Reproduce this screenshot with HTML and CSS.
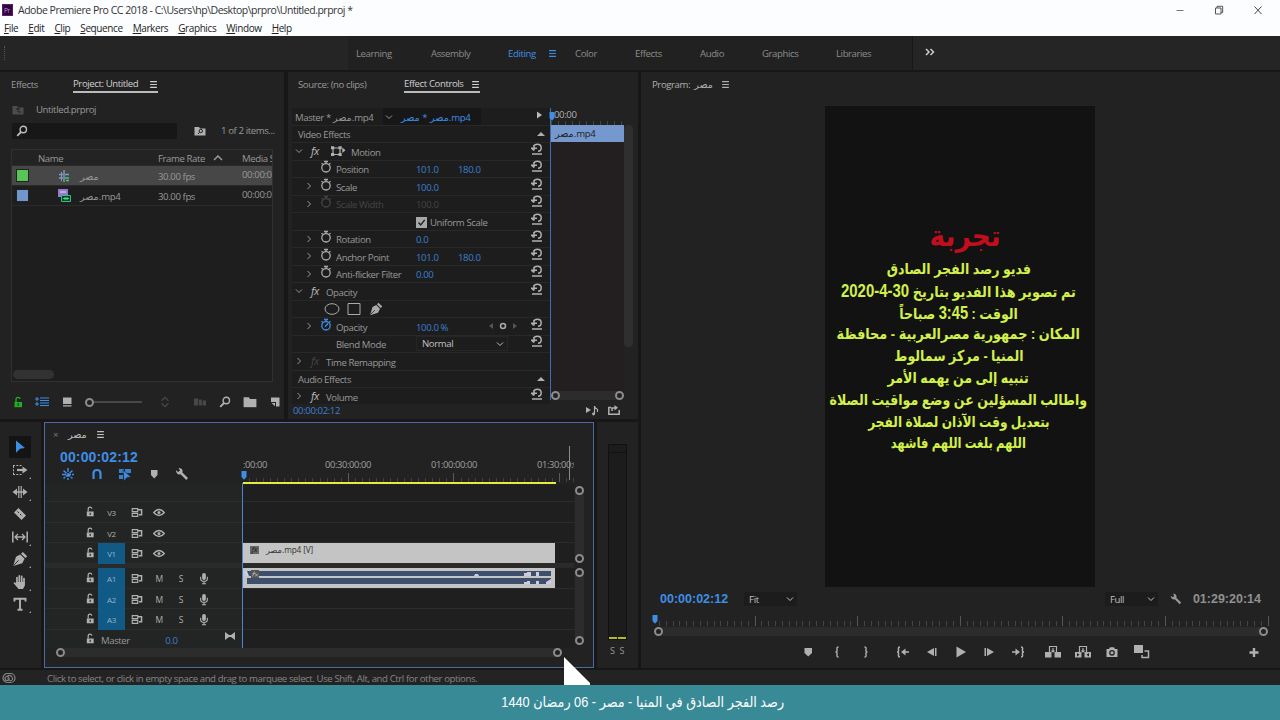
FILE: index.html
```html
<!DOCTYPE html>
<html lang="en">
<head>
  <meta charset="UTF-8" />
  <meta name="viewport" content="width=device-width, initial-scale=1.0"/>
  <title>Adobe Premiere Pro CC 2018</title>
  <link rel="stylesheet" href="styles.css">
</head>
<body>

  <svg class="sprite" width="0" height="0">
    <symbol id="reset" viewBox="0 0 12 12"><path d="M2.5 3.500Q3.500 1.200 6.200 1.200Q10.200 1.200 10.200 4.800Q10.200 8.300 7 8.300M0 5.200h6M3 7.500L.5 5.200M3 7.500V3M1 11h10" fill="none" stroke="currentColor" stroke-width="1.5"/></symbol>
    <symbol id="watch" viewBox="0 0 12 14"><circle cx="6" cy="7.8" r="4.2" fill="none" stroke="currentColor" stroke-width="1.3"/><path d="M4 1.5h4M6 1.5v2M1.5 3.2l1.2 1M10.5 3.2l-1.2 1" stroke="currentColor" stroke-width="1.3"/></symbol>
    <symbol id="watch-on" viewBox="0 0 12 14"><circle cx="6" cy="7.8" r="4.2" fill="none" stroke="currentColor" stroke-width="1.3"/><path d="M4 1.5h4M6 1.5v2M1.5 3.2l1.2 1M10.5 3.2l-1.2 1M5 8.8L8 5.5" stroke="currentColor" stroke-width="1.3"/></symbol>
    <symbol id="right" viewBox="0 0 8 8"><path d="M2.5 1l3 3-3 3" fill="none" stroke="currentColor"/></symbol>
    <symbol id="down" viewBox="0 0 8 8"><path d="M1 2.5l3 3 3-3" fill="none" stroke="currentColor"/></symbol>
    <symbol id="menu" viewBox="0 0 8 8"><path d="M1 1.5h6M1 4h6M1 6.5h6" stroke="currentColor" stroke-width="1.1"/></symbol>
    <symbol id="search" viewBox="0 0 12 12"><circle cx="7.3" cy="4.5" r="3.2" fill="none" stroke="currentColor" stroke-width="1.4"/><path d="M5 7L1.2 10.8" stroke="currentColor" stroke-width="1.8"/></symbol>
    <symbol id="lock" viewBox="0 0 10 12"><path d="M1.5 6h7.5v5.2H1.5z" fill="currentColor"/><path d="M3 6V3.5Q3 1.3 5 1.3T6.8 3" fill="none" stroke="currentColor" stroke-width="1.3"/><path d="M5.2 7.3v2.4" stroke="#222" stroke-width="1.2"/></symbol>
    <symbol id="sync" viewBox="0 0 12 12"><path d="M.8 1.800h6v3.200h-6zM.8 7h6v3.200h-6z" fill="none" stroke="currentColor" stroke-width="1.2"/><path d="M7 3h4v5.500H8" fill="none" stroke="currentColor" stroke-width="1.6"/></symbol>
    <symbol id="eye" viewBox="0 0 12 10"><path d="M.7 5Q6-1 11.300 5Q6 11 .7 5z" fill="none" stroke="currentColor" stroke-width="1.4"/><circle cx="6" cy="5" r="1.500" fill="currentColor"/></symbol>
    <symbol id="mic" viewBox="0 0 10 14"><rect x="3" y="1" width="4" height="7.5" rx="2" fill="currentColor"/><path d="M1.4 5v2.2Q1.4 10 5 10T8.6 7.2V5M5 10v3M2.8 12.6h4.4" fill="none" stroke="currentColor" stroke-width="1.2"/></symbol>
    <symbol id="wrench" viewBox="0 0 14 14"><path d="M1 3.2L3.2 5 5 3.6 3.6 1Q6 .6 7.2 2.6 8 4 7.4 5.4L13 11l-1.7 2L5.6 7.2Q3.6 8 2.2 6.6 .8 5.2 1 3.2z" fill="currentColor"/></symbol>
    <symbol id="pen" viewBox="0 0 14 14"><path d="M9.5.8l3.8 3.8-1.6 1.5L7.9 2.3zM7.2 3l3.8 3.8-2 4L1 13.2 3.5 5z" fill="currentColor"/><path d="M1.2 12.8l4.5-4.6" stroke="#222" stroke-width=".8"/></symbol>
    <symbol id="folder" viewBox="0 0 12 10"><path d="M.5 1H5l1 1.4h5.5V9.5H.5z" fill="currentColor"/></symbol>
    <symbol id="playhead" viewBox="0 0 6 9"><path d="M.5 0h5v6L3 8.8.5 6z" fill="currentColor"/></symbol>
  </svg>

  <div class="app">
    <header class="titlebar">
      <svg class="logo" viewBox="0 0 10 11"><rect width="10" height="11" fill="#2a0634"/><rect x=".5" y=".5" width="9" height="10" fill="none" stroke="#5b1c72"/><text x="1.8" y="7.8" font-size="6" font-family="Open Sans" fill="#d080f0">Pr</text></svg>
      <span class="title">Adobe Premiere Pro CC 2018 - C:\Users\hp\Desktop\prpro\Untitled.prproj *</span>
      <svg class="wbtn" viewBox="0 0 10 10"><path d="M1.5 5.5h7" stroke="#777"/></svg>
      <svg class="wbtn" viewBox="0 0 10 10"><path d="M1.5 3h5.5v6H1.5zM3 3V1.3h5.7v6.2H7" fill="none" stroke="#555"/></svg>
      <svg class="wbtn" viewBox="0 0 10 10"><path d="M1.5 1.5l7 7.5M8.5 1.5l-7 7.5" stroke="#444"/></svg>
    </header>
    <nav class="menubar">
      <span><u>F</u>ile</span><span><u>E</u>dit</span><span><u>C</u>lip</span><span><u>S</u>equence</span><span><u>M</u>arkers</span><span><u>G</u>raphics</span><span><u>W</u>indow</span><span><u>H</u>elp</span>
    </nav>
    <nav class="workspaces">
      <div class="grip"></div>
      <div class="ws-list">
        <span class="ws learning">Learning</span><span class="ws assembly">Assembly</span><span class="ws editing">Editing</span><svg class="ws-menu" viewBox="0 0 8 8"><use href="#menu"/></svg><span class="ws color">Color</span><span class="ws effects">Effects</span><span class="ws audio-ws">Audio</span><span class="ws graphics">Graphics</span><span class="ws">Libraries</span>
      </div>
      <svg class="more" viewBox="0 0 10 8"><path d="M1 1l3 3-3 3M5.5 1l3 3-3 3" fill="none" stroke="currentColor" stroke-width="1.5"/></svg>
    </nav>

    <main class="main">
      <div class="left">
        <div class="upper">
          <section class="panel project">
            <div class="tabs">
              <span class="tab tab-effects">Effects</span>
              <span class="tab on">Project: Untitled<svg class="burger" viewBox="0 0 8 8"><use href="#menu"/></svg></span>
            </div>
            <div class="crumb">
              <svg class="i12 dim" viewBox="0 0 12 10"><use href="#folder"/><path d="M4 4.5L6 3l2 1.5M6 3v4h3" fill="none" stroke="#222"/></svg>
              <span>Untitled.prproj</span>
            </div>
            <div class="search-row">
              <div class="search"><svg class="i12"><use href="#search"/></svg></div>
              <svg class="i12" viewBox="0 0 12 10"><use href="#folder"/><circle cx="6.8" cy="5" r="1.7" fill="none" stroke="#222"/><path d="M5.5 6.3L4 8" stroke="#222"/></svg>
              <span>1 of 2 items...</span>
            </div>
            <div class="table">
              <div class="tr th"><span></span><span class="name-head">Name</span><span class="rate">Frame Rate<svg class="sort" viewBox="0 0 10 6"><path d="M1 5l4-4 4 4" fill="none" stroke="currentColor" stroke-width="1.5"/></svg></span><span>Media S</span></div>
              <div class="tr selected"><i class="swatch green"></i>
                <svg class="i12 kind" viewBox="0 0 12 12"><path d="M1 4.5h4M1 8h4M7 4.5h4" stroke="#7a9cc8" stroke-width="1.5"/><path d="M6 0v12" stroke="#a8b8d8"/><path d="M3.5 2v9" stroke="#7a9cc8"/><path d="M7 8h4M8 10.5h3" stroke="#3ec98a" stroke-width="1.5"/></svg>
                <span class="fname">مصر</span><span class="rate">30.00 fps</span><span class="start">00:00:0</span></div>
              <div class="tr"><i class="swatch blue"></i>
                <svg class="i13 kind" viewBox="0 0 13 13"><path d="M0 0h10v8H0z" fill="#9678cc"/><path d="M2 2h6v2H2z" fill="#c0a8e8"/><path d="M3.5 6.5h9v6h-9z" fill="#10402a" stroke="#2fc47a"/><path d="M5 9.5h6M7 8v3M9 8v3" stroke="#48d894"/></svg>
                <span class="fname">مصر.mp4</span><span class="rate">30.00 fps</span><span class="start">00:00:0</span></div>
              <div class="thumb"></div>
            </div>
            <div class="project-tools">
              <svg class="i12 lime"><use href="#lock"/></svg>
              <svg class="i14 blue-ink" viewBox="0 0 14 10"><path d="M1 1h2v2H1zM1 6h2v2H1z" fill="none" stroke="currentColor"/><path d="M5 1h9M5 3.5h9M5 6h9M5 8.5h9" stroke="currentColor" stroke-width="1.2"/></svg>
              <svg class="i14" viewBox="0 0 14 12"><path d="M3 1.5h8.5v6.5H3zM3 9.3h8.5v1.3H3z" fill="currentColor"/></svg>
              <div class="slider"><i></i></div>
              <svg class="i14 dim sorticon" viewBox="0 0 14 14"><path d="M3 5.5l4-4 4 4M3 8.5l4 4 4-4" fill="none" stroke="currentColor" stroke-width="1.5"/></svg>
              <svg class="i14 dim automate" viewBox="0 0 14 12"><path d="M1 2.5h4v7H1zM5.8 3.5h3v6h-3zM9.6 4.5h3.4v5H9.6z" fill="currentColor"/></svg>
              <svg class="i14"><use href="#search"/></svg>
              <svg class="i14" viewBox="0 0 12 10"><use href="#folder"/></svg>
              <svg class="i14 newitem" viewBox="0 0 14 12"><path d="M3 1.5h8.5v9H8V6H3z" fill="currentColor"/><path d="M3.5 7h3.5v3.2z" fill="currentColor"/></svg>
            </div>
          </section>

          <section class="panel controls">
            <div class="tabs">
              <span class="tab tab-source">Source: (no clips)</span>
              <span class="tab on">Effect Controls<svg class="burger" viewBox="0 0 8 8"><use href="#menu"/></svg></span>
            </div>
            <div class="fx-body">
              <div class="fx-list">
                <div class="fx-row fx-head"><span class="master">Master * مصر.mp4</span><span class="clipname"><svg class="i8"><use href="#down"/></svg>مصر * مصر.mp4</span><svg class="i8 play" viewBox="0 0 8 8"><path d="M2 .5L7 4 2 7.5z" fill="currentColor"/></svg></div>
                <div class="fx-row cat"><span>Video Effects</span><i class="tri"></i></div>
                <div class="fx-row group"><svg class="i8"><use href="#down"/></svg><em>fx</em><svg class="box" viewBox="0 0 16 12"><path d="M3 3h7v6.5H3z" fill="none" stroke="currentColor" stroke-width="1.2"/><path d="M1 1.3h3.2v3H1zM8.5 1.3h3.2v3H8.5zM1 8h3.2v3H1zM8.5 8h3.2v3H8.5zM12.3 2.5l3.2 2.7-3.2 2.7z" fill="currentColor"/></svg><span>Motion</span><svg class="reset"><use href="#reset"/></svg></div>
                <div class="fx-row prop"><i></i><svg class="watch"><use href="#watch"/></svg><span>Position</span><b>101.0</b><b>180.0</b><svg class="reset"><use href="#reset"/></svg></div>
                <div class="fx-row prop"><svg class="i8"><use href="#right"/></svg><svg class="watch"><use href="#watch"/></svg><span>Scale</span><b>100.0</b><b></b><svg class="reset"><use href="#reset"/></svg></div>
                <div class="fx-row prop off"><svg class="i8"><use href="#right"/></svg><svg class="watch"><use href="#watch"/></svg><span>Scale Width</span><b>100.0</b><b></b><svg class="reset"><use href="#reset"/></svg></div>
                <div class="fx-row prop"><i></i><i></i><span></span><span class="check"><svg viewBox="0 0 11 11"><rect width="11" height="11" fill="#a8a8a8"/><path d="M2.5 5.5l2.2 2.4 4-5" fill="none" stroke="#222" stroke-width="1.5"/></svg>Uniform Scale</span><svg class="reset"><use href="#reset"/></svg></div>
                <div class="fx-row prop"><svg class="i8"><use href="#right"/></svg><svg class="watch"><use href="#watch"/></svg><span>Rotation</span><b>0.0</b><b></b><svg class="reset"><use href="#reset"/></svg></div>
                <div class="fx-row prop"><svg class="i8"><use href="#right"/></svg><svg class="watch"><use href="#watch"/></svg><span>Anchor Point</span><b>101.0</b><b>180.0</b><svg class="reset"><use href="#reset"/></svg></div>
                <div class="fx-row prop"><svg class="i8"><use href="#right"/></svg><svg class="watch"><use href="#watch"/></svg><span>Anti-flicker Filter</span><b>0.00</b><b></b><svg class="reset"><use href="#reset"/></svg></div>
                <div class="fx-row group"><svg class="i8"><use href="#down"/></svg><em>fx</em><span>Opacity</span><svg class="reset"><use href="#reset"/></svg></div>
                <div class="fx-row shapes"><svg viewBox="0 0 16 14"><ellipse cx="8" cy="7" rx="7" ry="5.3" fill="none" stroke="currentColor"/></svg><svg viewBox="0 0 16 14"><path d="M2 1.5h12v11H2z" fill="none" stroke="currentColor"/></svg><svg viewBox="0 0 14 14"><use href="#pen"/></svg></div>
                <div class="fx-row prop"><svg class="i8"><use href="#right"/></svg><svg class="watch blue-ink"><use href="#watch-on"/></svg><span>Opacity</span><b>100.0 %</b><svg class="keys" viewBox="0 0 30 8"><path d="M5 1v6L1 4zM25 1v6l4-3z" fill="#555"/><circle cx="15" cy="4" r="2.5" fill="none" stroke="currentColor" stroke-width="1.5"/></svg><svg class="reset"><use href="#reset"/></svg></div>
                <div class="fx-row prop"><i></i><i></i><span>Blend Mode</span><span class="select">Normal<svg class="i8"><use href="#down"/></svg></span><svg class="reset"><use href="#reset"/></svg></div>
                <div class="fx-row group"><svg class="i8"><use href="#right"/></svg><em class="dim">fx</em><span>Time Remapping</span></div>
                <div class="fx-row cat"><span>Audio Effects</span><i class="tri"></i></div>
                <div class="fx-row group"><svg class="i8"><use href="#right"/></svg><em>fx</em><span>Volume</span><svg class="reset"><use href="#reset"/></svg></div>
              </div>
              <div class="fx-time">
                <div class="fx-ruler"><span>00:00</span></div>
                <div class="fx-clip">مصر.mp4</div>
                <div class="fx-space"></div>
                <div class="hbar"><i></i><i></i></div>
                <svg class="head" viewBox="0 0 6 9"><use href="#playhead"/></svg>
              </div>
              <div class="fx-scroll"></div>
            </div>
            <div class="fx-foot"><span>00:00:02:12</span>
              <svg viewBox="0 0 14 12"><path d="M1 3v6l5-3z" fill="currentColor"/><path d="M9.5 10V2q0 2 3 3.5v2.5" fill="none" stroke="currentColor" stroke-width="1.2"/><circle cx="8.5" cy="10" r="1.4" fill="currentColor"/></svg>
              <svg viewBox="0 0 14 12"><path d="M4 3.5H1.8v6.8h10.4V6M5 7V4h3" fill="none" stroke="currentColor" stroke-width="1.5"/><path d="M7.5 1l3.5 2.8-3.5 2.8z" fill="currentColor"/></svg>
            </div>
          </section>
        </div>

        <div class="lower">
          <section class="panel tools">
            <div class="tool picked"><svg viewBox="0 0 16 16"><path d="M4 1.5l9 7.5-5 .8-4 4z" fill="currentColor"/></svg></div>
            <div class="tool more-tools"><svg viewBox="0 0 16 16"><path d="M1 3.5h9M1 12.5h9M1.5 4v8" fill="none" stroke="currentColor" stroke-dasharray="2 1.3"/><path d="M5 8h6" stroke="currentColor" stroke-width="2.2"/><path d="M10.5 4.5L15.5 8l-5 3.5z" fill="currentColor"/></svg></div>
            <div class="tool more-tools"><svg viewBox="0 0 16 16"><path d="M6.8 2v12M9.2 2v12" stroke="currentColor" stroke-width="1.2"/><path d="M.5 8l4.5-3.5v7zM15.5 8L11 4.5v7z" fill="currentColor"/><path d="M4 8h8" stroke="currentColor" stroke-width="1.5"/></svg></div>
            <div class="tool"><svg viewBox="0 0 16 16"><path d="M6.5 2L14 9.5 9.5 14 2 6.5z" fill="currentColor"/><path d="M5.5 5.5l5 5" stroke="#222" stroke-dasharray="2 1.5"/></svg></div>
            <div class="tool more-tools"><svg viewBox="0 0 16 16"><path d="M.8 2.5v11M15.2 2.5v11" stroke="currentColor" stroke-width="1.5"/><path d="M4 8h8M6 5L3 8l3 3M10 5l3 3-3 3" fill="none" stroke="currentColor" stroke-width="1.3"/></svg></div>
            <div class="tool more-tools"><svg viewBox="0 0 14 14"><use href="#pen"/></svg></div>
            <div class="tool more-tools"><svg viewBox="0 0 16 16"><path d="M5 9V3.5M7.3 8V1.8M9.7 8V2.3M12 9V4.5" stroke="currentColor" stroke-width="1.7" stroke-linecap="round"/><path d="M4.2 8h8.7v3.5L11 15H6.5L1.5 9q1-1.5 2.7.5z" fill="currentColor"/></svg></div>
            <div class="tool more-tools"><svg viewBox="0 0 16 16"><path d="M2.500 5.500V2.800h11v2.700M8 2.800v11M5.500 13.800h5" fill="none" stroke="currentColor" stroke-width="1.900"/></svg></div>
          </section>

          <section class="panel timeline">
            <div class="seq-tab"><span class="close">×</span><b>مصر</b><svg class="burger" viewBox="0 0 8 8"><use href="#menu"/></svg></div>
            <div class="seq-top">
              <div class="seq-info">
                <div class="bigtime">00:00:02:12</div>
                <div class="seq-icons">
                  <svg class="blue-ink" viewBox="0 0 14 14"><path d="M7 1v12M1 7.5h12M2.5 3.5l9 8M11.5 3.5l-9 8" stroke="currentColor" stroke-width="1.4" stroke-dasharray="4 1"/></svg>
                  <svg class="blue-ink" viewBox="0 0 14 14"><path d="M3.5 12V6.5Q3.5 3 7 3t3.5 3.5V12" fill="none" stroke="currentColor" stroke-width="2.2"/></svg>
                  <svg class="blue-ink" viewBox="0 0 14 14"><path d="M1 2h5v4H1zM7 2h6v4H7zM1 8h4v4H1z" fill="currentColor" opacity=".85"/><path d="M5 3l8 7-4 .4L6 14z" fill="currentColor" stroke="#222" stroke-width=".6"/></svg>
                  <svg viewBox="0 0 14 14"><path d="M4 3h6.5v5L7.2 11.5 4 8z" fill="currentColor"/></svg>
                  <svg viewBox="0 0 14 14"><use href="#wrench"/></svg>
                </div>
              </div>
              <div class="seq-ruler">
                <div class="ruler-labels"><span>:00:00</span><span>00:30:00:00</span><span>01:00:00:00</span><span>01:30:00:0</span></div>
                <div class="ruler-ticks"></div>
                <div class="workarea"></div>
                <svg class="head" viewBox="0 0 6 9"><use href="#playhead"/></svg>
                <div class="endline"></div>
              </div>
            </div>
            <div class="seq-body">
              <div class="tracks">
                <div class="track spacer"><div class="t-head"></div><div class="lane"></div></div>
                <div class="track"><div class="t-head"><svg class="lk"><use href="#lock"/></svg><span class="t-name">V3</span><svg><use href="#sync"/></svg><svg><use href="#eye"/></svg></div><div class="lane"></div></div>
                <div class="track"><div class="t-head"><svg class="lk"><use href="#lock"/></svg><span class="t-name">V2</span><svg><use href="#sync"/></svg><svg><use href="#eye"/></svg></div><div class="lane"></div></div>
                <div class="track"><div class="t-head"><svg class="lk"><use href="#lock"/></svg><span class="t-name src">V1</span><svg><use href="#sync"/></svg><svg><use href="#eye"/></svg></div><div class="lane"><div class="clip video"><i>fx</i>مصر.mp4 [V]</div></div></div>
                <div class="divider"></div>
                <div class="track"><div class="t-head"><svg class="lk"><use href="#lock"/></svg><span class="t-name src">A1</span><svg><use href="#sync"/></svg><span>M</span><span>S</span><svg class="mic"><use href="#mic"/></svg></div><div class="lane">
                  <div class="clip audio"><svg viewBox="0 0 312 20"><rect x="4" y="3" width="304" height="5" fill="#3d4f6c"/><rect x="4" y="10" width="304" height="6" fill="#3d4f6c"/><path d="M231 8l1-2h3l1 2zM281 8V5h3V4h4v4zM293 8V4h3v4zM281 16v-2h3v-1h3v3zM293 16v-3h3v3zM303 16v-2l5-3v5zM0 3h4l2 5H3z" fill="#ccd"/><rect x="8" y="2" width="8" height="8" fill="#555"/><path d="M9.5 8.5l2-5M9.5 5.5h3M12 5.5l3 3M15 5.5l-3 3" stroke="#bbb" stroke-width=".8"/></svg></div></div></div>
                <div class="track"><div class="t-head"><svg class="lk"><use href="#lock"/></svg><span class="t-name src">A2</span><svg><use href="#sync"/></svg><span>M</span><span>S</span><svg class="mic"><use href="#mic"/></svg></div><div class="lane"></div></div>
                <div class="track"><div class="t-head"><svg class="lk"><use href="#lock"/></svg><span class="t-name src">A3</span><svg><use href="#sync"/></svg><span>M</span><span>S</span><svg class="mic"><use href="#mic"/></svg></div><div class="lane"></div></div>
                <div class="track master-track"><div class="t-head"><svg class="lk"><use href="#lock"/></svg><span class="m-name">Master</span><span class="m-vol">0.0</span><svg class="bow" viewBox="0 0 10 8"><path d="M0 0l4 3h2l4-3v8L6 5H4L0 8z" fill="currentColor"/></svg></div><div class="lane"></div></div>
                <div class="playline"></div>
              </div>
              <div class="vbars"><div class="vbar v1"><i></i><i></i></div><div class="vbar v2"><i></i><i></i></div></div>
            </div>
            <div class="hbar seq-scroll"><i></i><i></i></div>
          </section>

          <section class="panel meters">
            <div class="meter"><i></i><i></i></div>
            <div class="solo"><span>S</span><span>S</span></div>
          </section>
        </div>
      </div>

      <section class="panel program">
        <div class="tabs"><span class="tab">Program: <b>مصر</b><svg class="burger" viewBox="0 0 8 8"><use href="#menu"/></svg></span></div>
        <div class="screen" dir="rtl" lang="ar">
          <h1><span>تجربة</span></h1>
          <p><span>فديو رصد الفجر الصادق</span></p>
          <p class="loose"><span>تم تصوير هذا الفديو بتاريخ <b>30-4-2020</b></span></p>
          <p><span>الوقت : <b>3:45</b> صباحاً</span></p>
          <p class="loose"><span>المكان : جمهورية مصرالعربية - محافظة</span></p>
          <p><span>المنيا - مركز سمالوط</span></p>
          <p><span>تنبيه إلى من يهمه الأمر</span></p>
          <p><span>واطالب المسؤلين عن وضع مواقيت الصلاة</span></p>
          <p class="tight"><span>بتعديل وقت الآذان لصلاة الفجر</span></p>
          <p class="tighter"><span>اللهم بلغت اللهم فاشهد</span></p>
        </div>
        <div class="prog-info">
          <span class="ptime">00:00:02:12</span>
          <span class="pselect">Fit<svg class="i8"><use href="#down"/></svg></span>
          <span class="pselect full">Full<svg class="i8"><use href="#down"/></svg></span>
          <svg class="i12" viewBox="0 0 14 14"><use href="#wrench"/></svg>
          <span class="duration">01:29:20:14</span>
        </div>
        <div class="prog-ruler"><svg class="head" viewBox="0 0 6 9"><use href="#playhead"/></svg></div>
        <div class="hbar prog-scroll"><i></i><i></i></div>
        <div class="transport">
          <div class="tgroup marks">
            <svg viewBox="0 0 16 14"><path d="M4.5 3h7.5v5L8.2 11.5 4.5 8z" fill="currentColor"/></svg>
            <svg viewBox="0 0 16 14"><path d="M9.5 2Q7.5 2 8 4.5T6.5 7Q8.5 7 8 9.5T9.5 12" fill="none" stroke="currentColor" stroke-width="1.4"/></svg>
            <svg viewBox="0 0 16 14"><path d="M6.5 2Q8.5 2 8 4.5T9.5 7Q7.5 7 8 9.5T6.5 12" fill="none" stroke="currentColor" stroke-width="1.4"/></svg>
          </div>
          <div class="tgroup playback">
            <svg viewBox="0 0 16 14"><path d="M5 2Q3 2 3.5 4.5T2 7Q4 7 3.5 9.5T5 12M9 7h5" fill="none" stroke="currentColor" stroke-width="1.5"/><path d="M10.5 3.5v7L6 7z" fill="currentColor"/></svg>
            <svg viewBox="0 0 16 14"><path d="M10 3v8L3 7zM11 3h1.5v8H11z" fill="currentColor"/></svg>
            <svg viewBox="0 0 16 14"><path d="M3.5 1.500L13 7l-9.5 5.500z" fill="currentColor"/></svg>
            <svg viewBox="0 0 16 14"><path d="M6 3v8l7-4zM3.5 3H5v8H3.5z" fill="currentColor"/></svg>
            <svg viewBox="0 0 16 14"><path d="M11 2Q13 2 12.5 4.5T14 7Q12 7 12.5 9.5T11 12M2 7h5" fill="none" stroke="currentColor" stroke-width="1.5"/><path d="M5.5 3.5v7L10 7z" fill="currentColor"/></svg>
          </div>
          <div class="tgroup edits">
            <svg viewBox="0 0 16 14"><path d="M0 7h6.5v5.5H0zM9.5 7H16v5.5H9.5z" fill="currentColor"/><path d="M4.500 7V1.500h7V7M8 3v4M6.500 5.500L8 7l1.500-1.500" fill="none" stroke="currentColor" stroke-width="1.2"/></svg>
            <svg viewBox="0 0 16 14"><path d="M4.5 7V1.500h7V7M8 3v4M6.500 5.500L8 7l1.500-1.500" fill="none" stroke="currentColor" stroke-width="1.2"/><path d="M0 7h6.500v5.500H0zM9.500 7H16v5.500H9.500z" fill="currentColor"/><path d="M2 8l2.500 1.800L2 11.500zM14 8l-2.500 1.800 2.500 1.700z" fill="#222"/></svg>
            <svg viewBox="0 0 16 14"><path d="M2.500 4H5l1-1.800h4L11 4h2.500v8h-11z" fill="currentColor"/><circle cx="8" cy="7.800" r="2.200" fill="none" stroke="#222" stroke-width="1.300"/></svg>
            <svg viewBox="0 0 16 14"><path d="M0 0h9v8H0z" fill="currentColor"/><path d="M10.500 6h4v6.500H8V10" fill="none" stroke="currentColor" stroke-width="1.5"/></svg>
          </div>
          <svg class="plus" viewBox="0 0 16 14"><path d="M8 3v9M3.5 7.5h9" stroke="currentColor" stroke-width="2.4"/></svg>
        </div>
      </section>
    </main>

    <footer class="status">
      <svg viewBox="0 0 14 12"><rect x="1" y="1.5" width="12" height="9" rx="4.5" fill="none" stroke="currentColor" stroke-width="1.2"/><circle cx="5" cy="6.5" r="2" fill="none" stroke="currentColor" stroke-width="1.1"/><path d="M5 4.5Q8 2 10 5t-2 4L5.5 6" fill="none" stroke="currentColor" stroke-width="1.1"/></svg>
      <span>Click to select, or click in empty space and drag to marquee select. Use Shift, Alt, and Ctrl for other options.</span>
    </footer>
    <svg class="pointer" viewBox="0 0 28 30"><path d="M0 1l26 26v3H0z" fill="#fff"/></svg>
    <div class="caption" dir="rtl" lang="ar"><span>رصد الفجر الصادق في المنيا - مصر - 06 رمضان 1440</span></div>
  </div>

</body>
</html>
```
FILE: styles.css
```css
* {
  box-sizing: border-box;
}

body {
  margin: 0;
  background: #17171a;
  color: #989898;
  font-family: 'Open Sans', 'DejaVu Sans', sans-serif;
  font-size: 9.6px;
  letter-spacing: -0.4px;
  white-space: nowrap;
}

svg {
  display: block;
  flex: none;
}

b, em {
  font-weight: normal;
}

.sprite {
  position: absolute;
}

.app {
  position: relative;
  width: 1280px;
  height: 720px;
  overflow: hidden;
  display: flex;
  flex-direction: column;
}

.i8 { width: 8px; height: 8px; }
.i12 { width: 12px; height: 12px; }
.i13 { width: 13px; height: 13px; }
.i14 { width: 14px; height: 12px; }
.dim { color: #4c4c4c; }
.blue-ink { color: #3f8ee6; }
.lime { color: #1fae1f; }

/* window chrome */
.titlebar {
  height: 20px;
  background: #fcfdff;
  display: flex;
  align-items: center;
  padding-left: 2px;
  color: #333;
  font-size: 10.5px;
  letter-spacing: -0.48px;
}

.logo {
  width: 11px;
  height: 12px;
  margin-right: 5px;
}

.title {
  flex: 1;
}

.wbtn {
  width: 10px;
  height: 10px;
  margin-right: 29px;
}

.wbtn:last-child {
  margin-right: 17px;
}

.menubar {
  height: 16px;
  background: #fcfdff;
  display: flex;
  gap: 10px;
  padding-left: 4px;
  color: #222;
  font-size: 10px;
  line-height: 16px;
}

.workspaces {
  height: 34px;
  background: #262526;
  display: flex;
  align-items: center;
}

.grip {
  width: 1px;
  height: 14px;
  margin: 0 343px 0 4px;
  border-left: 1px dotted #555;
}

.ws-list {
  width: 565px;
  height: 34px;
  background: #212121;
  border-right: 1px solid #181818;
  padding-left: 8px;
  display: flex;
  align-items: center;
}

.ws { color: #8c8c8c; }
.learning { width: 75px; }
.assembly { width: 77px; }
.editing { width: 40px; }
.color { width: 60px; }
.effects { width: 65px; }
.audio-ws { width: 62px; }
.graphics { width: 74px; }

.ws.editing, .ws-menu {
  color: #3f8ee6;
}

.ws-menu {
  width: 9px;
  height: 9px;
  margin-right: 18px;
}

.more {
  width: 10px;
  height: 8px;
  margin: -3px 0 0 12px;
  color: #ccc;
}

/* panels */
.main {
  height: 600px;
  padding: 2px 0;
  display: flex;
  gap: 3px;
}

.left {
  width: 638px;
  display: flex;
  flex-direction: column;
  gap: 3px;
}

.upper {
  height: 347px;
  display: flex;
  gap: 4px;
}

.lower {
  height: 246px;
  display: flex;
  gap: 3px;
}

.panel {
  background: #222;
  position: relative;
}

.tabs {
  height: 27px;
  display: flex;
  padding-left: 11px;
}

.tab {
  height: 21px;
  padding-top: 4px;
  line-height: 18px;
  display: flex;
  align-items: center;
}

.tab.on {
  padding-top: 5px;
  color: #d0d0d0;
  border-bottom: 2px solid #bbb;
}

.burger {
  width: 9px;
  height: 9px;
  margin-left: auto;
}

.project {
  width: 284px;
}

.tab-effects {
  width: 62px;
}

.project .on {
  width: 85px;
}

.crumb {
  height: 21px;
  padding-left: 12px;
  display: flex;
  align-items: center;
  gap: 12px;
}

.search-row {
  height: 21px;
  padding-left: 12px;
  display: flex;
  align-items: center;
}

.search {
  width: 165px;
  height: 16px;
  padding: 2px 4px;
  background: #171717;
  margin-right: 17px;
  color: #bbb;
}

.search-row span {
  margin-left: 15px;
}

.search-row > svg {
  color: #b0b0b0;
}

.table {
  width: 262px;
  height: 233px;
  margin: 8px 0 0 11px;
  border: 1px solid #303030;
  background: #1e1e1e;
  display: flex;
  flex-direction: column;
  overflow: hidden;
}

.tr {
  height: 20px;
  display: grid;
  grid-template-columns: 46px 22px 78px 84px 40px;
  align-items: center;
  border-bottom: 1px solid #2a2a2a;
  flex: none;
}

.tr span {
  padding-top: 1px;
}

.tr.th {
  height: 16px;
  grid-template-columns: 26px 120px 84px 40px;
  background: #232323;
}

.tr.selected {
  background: #474747;
}

.kind {
  justify-self: start;
}

.rate {
  display: flex;
  align-items: center;
  gap: 8px;
}

.start {
  margin-top: -3px;
}

.sort {
  width: 10px;
  height: 6px;
}

.swatch {
  width: 11px;
  height: 11px;
  margin-left: 5px;
  outline: 1px solid #222;
}

.swatch.green { background: #57c657; }
.swatch.blue { background: #7096cc; }

.thumb {
  width: 41px;
  height: 9px;
  margin: auto 0 2px 1px;
  border-radius: 5px;
  background: #323232;
}

.project-tools {
  height: 40px;
  padding-left: 12px;
  display: flex;
  align-items: center;
  gap: 11px;
  color: #b0b0b0;
}

.project-tools .dim {
  color: #484848;
}

.slider {
  width: 57px;
  height: 2px;
  background: #484848;
  display: flex;
  align-items: center;
}

.slider i, .hbar i, .vbar i {
  width: 9px;
  height: 9px;
  border: 2px solid #8c8c8c;
  border-radius: 50%;
  background: #222;
}

.sorticon { margin-left: 5px; }
.automate { margin-left: 10px; }

.hbar {
  height: 9px;
  background: #2c2c2c;
  border-radius: 5px;
  display: flex;
  justify-content: space-between;
}

/* effect controls */
.controls {
  width: 350px;
}

.controls .tabs {
  padding-left: 10px;
}

.tab-source {
  width: 106px;
}

.controls .on {
  width: 76px;
}

.fx-body {
  height: 296px;
  margin: 9px 0 0 4px;
  display: flex;
}

.fx-list {
  width: 258px;
  background: #1d1d1d;
  overflow: hidden;
}

.fx-row {
  height: 17.5px;
  display: flex;
  align-items: center;
  border-bottom: 1px solid #282828;
}

.fx-row:last-child {
  height: 16px;
  border: 0;
}

.fx-row > span, .fx-row > b {
  padding-top: 2px;
}

.fx-head {
  padding-left: 3px;
}

.master {
  width: 88px;
}

.clipname {
  align-self: stretch;
  width: 98px;
  padding-left: 2px;
  display: flex;
  align-items: center;
  gap: 8px;
  background: #171717;
  color: #3f8ee6;
}

.clipname svg {
  color: #989898;
}

.play {
  margin: -2px 0 0 54px;
  color: #bbb;
}

.cat {
  padding: 0 5px 0 6px;
  justify-content: space-between;
}

.tri {
  border: 4px solid transparent;
  border-top: 0;
  border-bottom: 4px solid #b0b0b0;
}

.group {
  padding-left: 3px;
}

.group em {
  width: 23px;
  padding-left: 8px;
  font-size: 11px;
  line-height: 14px;
  color: #bbb;
}

.group em.dim {
  color: #444;
}

.box {
  width: 16px;
  height: 12px;
  margin: 0 5px 0 4px;
  color: #b0b0b0;
}

.reset {
  width: 12px;
  height: 12px;
  margin: -5px 7px 0 auto;
  color: #b0b0b0;
}

.prop {
  display: grid;
  grid-template-columns: 15px 16px 80px 42px 72px 1fr;
  padding-left: 13px;
}

.watch {
  width: 12px;
  height: 14px;
  margin-top: -3px;
  color: #aaa;
}

.watch.blue-ink {
  color: #3f8ee6;
}

.prop b {
  color: #3a7fd0;
}

.prop.off span, .prop.off b, .prop.off .watch {
  color: #444;
}

.check, .select {
  grid-column: 4 / 6;
  display: flex;
  align-items: center;
}

.check svg {
  width: 11px;
  height: 11px;
  margin-right: 3px;
}

.prop .select {
  width: 92px;
  height: 15px;
  padding: 0 3px 0 5px;
  justify-content: space-between;
  border: 1px solid #262626;
  color: #c0c0c0;
}

.keys {
  width: 30px;
  height: 8px;
  margin-left: 30px;
  color: #aaa;
}

.shapes {
  padding-left: 32px;
  gap: 6px;
  color: #aaa;
}

.shapes svg {
  width: 16px;
  height: 14px;
}

.fx-time {
  position: relative;
  width: 74px;
  margin-bottom: 4px;
  border-left: 1px solid #3f6fae;
  display: flex;
  flex-direction: column;
  background: #231f20;
}

.fx-ruler {
  height: 17px;
  padding-left: 3px;
  line-height: 13px;
  color: #b0b0b0;
  background: repeating-linear-gradient(90deg, #444 0 1px, transparent 1px 7px) 0 100% / 100% 4px no-repeat #222;
}

.fx-clip {
  height: 17px;
  padding-left: 4px;
  background: #7599cf;
  color: #222;
  line-height: 18px;
}

.fx-space {
  flex: 1;
}

.head {
  position: absolute;
  left: -2px;
  top: 4px;
  width: 6px;
  height: 9px;
  color: #3f8ee6;
}

.fx-scroll {
  width: 9px;
  height: 222px;
  margin: 17px 0 0 0;
  border-radius: 4px;
  background: #2f2f2f;
}

.fx-foot {
  height: 12px;
  padding: 0 17px 0 5px;
  display: flex;
  align-items: center;
  gap: 8px;
  color: #b0b0b0;
}

.fx-foot span {
  flex: 1;
  color: #3a7fd0;
}

.fx-foot svg {
  width: 14px;
  height: 12px;
}

/* tools */
.tools {
  width: 41px;
  padding: 14px 0 0 9px;
}

.tool {
  position: relative;
  width: 22px;
  height: 22.4px;
  display: flex;
  align-items: center;
  justify-content: center;
  color: #b0b0b0;
}

.tool svg {
  width: 16px;
  height: 16px;
}

.tool.picked {
  background: #141414;
  color: #3f8ee6;
}

.more-tools::after {
  content: '';
  position: absolute;
  right: 0;
  bottom: 2px;
  border: 1.5px solid transparent;
  border-right-color: #999;
  border-bottom-color: #999;
}

/* timeline */
.timeline {
  width: 550px;
  border: 1px solid #4a6aa0;
}

.seq-tab {
  height: 22px;
  padding-left: 8px;
  display: flex;
  align-items: center;
  color: #c0c0c0;
}

.close {
  width: 15px;
  color: #777;
}

.seq-tab .burger {
  margin: 0 0 0 9px;
}

.seq-top {
  height: 40px;
  display: flex;
}

.seq-info {
  width: 198px;
  padding: 3px 0 0 15px;
}

.bigtime {
  font: bold 14px/18px 'Liberation Sans', sans-serif;
  letter-spacing: 0.15px;
  color: #3f8ee6;
}

.seq-icons {
  display: flex;
  gap: 14.5px;
  margin-top: 1px;
  padding-left: 1px;
  color: #b0b0b0;
}

.seq-icons svg {
  width: 14px;
  height: 14px;
}

.seq-ruler {
  position: relative;
  width: 331px;
}

.ruler-labels {
  height: 28px;
  padding-top: 13px;
  display: flex;
  overflow: hidden;
  color: #a0a0a0;
  font-size: 9.4px;
}

.ruler-labels span {
  flex: none;
}

.ruler-labels span:nth-child(1) { width: 82px; }
.ruler-labels span:nth-child(2) { width: 106px; }
.ruler-labels span:nth-child(3) { width: 106px; }

.ruler-ticks {
  height: 9px;
  background:
    repeating-linear-gradient(90deg, transparent 0 104.7px, #5a5a5a 104.7px 105.7px),
    repeating-linear-gradient(90deg, transparent 0 6.05px, #404040 6.05px 7.05px) 0 5px / 100% 4px no-repeat;
}

.workarea {
  width: 313px;
  height: 2px;
  background: #e6ea3c;
}

.seq-ruler .head {
  top: 26px;
}

.endline {
  position: absolute;
  left: 326px;
  top: 1px;
  width: 1px;
  height: 34px;
  background: #8a8a8a;
}

.seq-body {
  display: flex;
  height: 163px;
}

.tracks {
  position: relative;
  width: 529px;
}

.track {
  height: 20.7px;
  display: flex;
  border-bottom: 1px solid #2c2c2c;
}

.track.spacer {
  height: 17px;
}

.track.master-track {
  height: 18px;
  border: 0;
}

.t-head {
  width: 198px;
  padding-left: 38px;
  display: grid;
  grid-template-columns: 15px 27px 23px 22px 22px 23px;
  align-items: center;
  justify-items: center;
  background: #232424;
  color: #b0b0b0;
  font-size: 8.5px;
}

.t-head svg {
  width: 12px;
  height: 11px;
}

.t-head .lk {
  margin: -2px 2px 0 0;
}

.t-name {
  align-self: stretch;
  justify-self: stretch;
  text-align: center;
  line-height: 21px;
  font-size: 8px;
}

.t-name.src {
  background: #125a86;
  color: #8fb4d0;
}

.t-head .mic {
  height: 13px;
}

.m-name {
  grid-column: 2 / 4;
  justify-self: start;
  padding-left: 3px;
  font-size: 9.6px;
  line-height: 12px;
  margin-top: 3px;
  color: #989898;
}

.m-vol {
  grid-column: 4 / 6;
  margin: 3px 0 0 3px;
  color: #3a7fd0;
  font-size: 9.6px;
  line-height: 12px;
}

.t-head .bow {
  width: 10px;
  height: 8px;
  justify-self: end;
  margin-right: -20px;
  margin-top: -6px;
}

.lane {
  flex: 1;
  background: #1f1f20;
}

.divider {
  height: 4px;
  background: #2a2a2a;
}

.clip {
  width: 312px;
  height: 20px;
  background: #c4c4c4;
}

.clip.video {
  display: flex;
  padding: 3px 0 0 7px;
  color: #333;
  font-size: 8.2px;
  letter-spacing: -0.1px;
  line-height: 8px;
}

.clip i {
  width: 9px;
  height: 8px;
  margin-right: 7px;
  background: #666;
  color: #111;
  font-size: 7px;
  text-align: center;
}

.clip.audio svg {
  width: 312px;
  height: 20px;
}

.playline {
  position: absolute;
  left: 197px;
  top: -2px;
  width: 1px;
  height: 165px;
  background: #4a86d0;
}

.vbars {
  width: 11px;
  padding-top: 1px;
  display: flex;
  flex-direction: column;
  gap: 5px;
}

.vbar {
  width: 9px;
  height: 77px;
  margin-left: 1px;
  border-radius: 5px;
  background: #2c2c2c;
  display: flex;
  flex-direction: column;
  justify-content: space-between;
}

.seq-scroll {
  width: 506px;
  margin: 0 0 0 11px;
}

/* audio meters */
.meters {
  width: 41px;
  padding: 22px 0 0 11px;
}

.meter {
  width: 19px;
  height: 196px;
  border: 1px solid #111;
  background: linear-gradient(#111, #111) 0 7px / 100% 1px no-repeat #1c1c1c;
  display: flex;
  align-items: flex-end;
  gap: 1px;
}

.meter i {
  flex: 1;
  height: 2px;
  background: #b4ba22;
}

.solo {
  display: flex;
  gap: 5px;
  padding: 4px 0 0 2px;
  font-size: 9px;
}

/* program monitor */
.program {
  width: 639px;
  display: flex;
  flex-direction: column;
}

.program .tab {
  color: #b0b0b0;
}

.program .tab b {
  margin-left: 4px;
}

.program .burger {
  margin-left: 8px;
}

.screen {
  width: 270px;
  height: 481px;
  margin: 7px 0 0 184px;
  padding-top: 110px;
  background: #121212;
  font-family: 'Liberation Sans', 'DejaVu Sans', sans-serif;
  letter-spacing: 0;
  text-align: center;
}

.screen h1 {
  height: 42px;
  margin: 0 0 0 10px;
  font-size: 29px;
  line-height: 40px;
  color: #c00e1c;
}

.screen p {
  height: 21.8px;
  margin: 0 -18px 0 -21px;
  font-size: 15px;
  font-weight: bold;
  line-height: 22px;
  color: #d2f04a;
}

.screen span {
  display: inline-block;
  transform: scaleX(.84);
}

.screen h1 span { transform: scaleX(.91); }
.screen .loose span { transform: scaleX(.855); }
.screen .tight span { transform: scaleX(.81); }
.screen .tighter span { transform: scaleX(.775); }

.screen b {
  font-size: 17.5px;
  font-weight: bold;
  letter-spacing: 0.8px;
}

.prog-info {
  height: 24px;
  padding: 0 19px;
  display: flex;
  align-items: center;
}

.ptime, .duration {
  font: bold 12.5px 'Liberation Sans', sans-serif;
  letter-spacing: 0;
  color: #3f8ee6;
}

.duration {
  margin-left: 11px;
  color: #909090;
}

.pselect {
  width: 53px;
  height: 14px;
  margin-left: 16px;
  padding: 0 3px 0 5px;
  background: #1c1c1c;
  color: #c0c0c0;
  display: flex;
  align-items: center;
  justify-content: space-between;
}

.pselect.full {
  margin: 0 12px 0 auto;
}

.prog-ruler {
  position: relative;
  height: 14px;
  margin: 2px 11px 0 12px;
  background:
    repeating-linear-gradient(90deg, transparent 0 101.6px, #555 101.6px 102.6px) 0 3px / 100% 10px no-repeat,
    repeating-linear-gradient(90deg, transparent 0 5.84px, #444 5.84px 6.84px) 0 8px / 100% 5px no-repeat;
}

.prog-ruler .head {
  top: 2px;
  left: -1px;
}

.prog-scroll {
  margin: 0 12px 0 13px;
}

.transport {
  position: relative;
  height: 32px;
  padding-left: 159px;
  display: flex;
  align-items: center;
  color: #b0b0b0;
}

.transport svg {
  width: 16px;
  height: 14px;
}

.tgroup {
  display: flex;
  gap: 13px;
}

.marks {
  margin-right: 21px;
}

.playback {
  gap: 12.8px;
  margin-right: 19px;
}

.edits {
  gap: 13.5px;
}

.transport .plus {
  margin: 0 18px 0 auto;
}

/* bottom */
.status {
  height: 15px;
  background: #242323;
  display: flex;
  align-items: center;
  gap: 31px;
  padding-left: 2px;
  color: #858585;
}

.status svg {
  width: 14px;
  height: 12px;
}

.status span {
  padding-top: 1px;
}

.pointer {
  position: absolute;
  left: 564px;
  top: 656px;
  width: 28px;
  height: 30px;
}

.caption {
  position: relative;
  height: 35px;
  padding-left: 5px;
  background: #398a97;
  color: #fff;
  font: 14.5px/35px 'Liberation Sans', 'DejaVu Sans', sans-serif;
  letter-spacing: 0;
  text-align: center;
}

.caption span {
  display: inline-block;
  transform: scaleX(.88);
}
```
